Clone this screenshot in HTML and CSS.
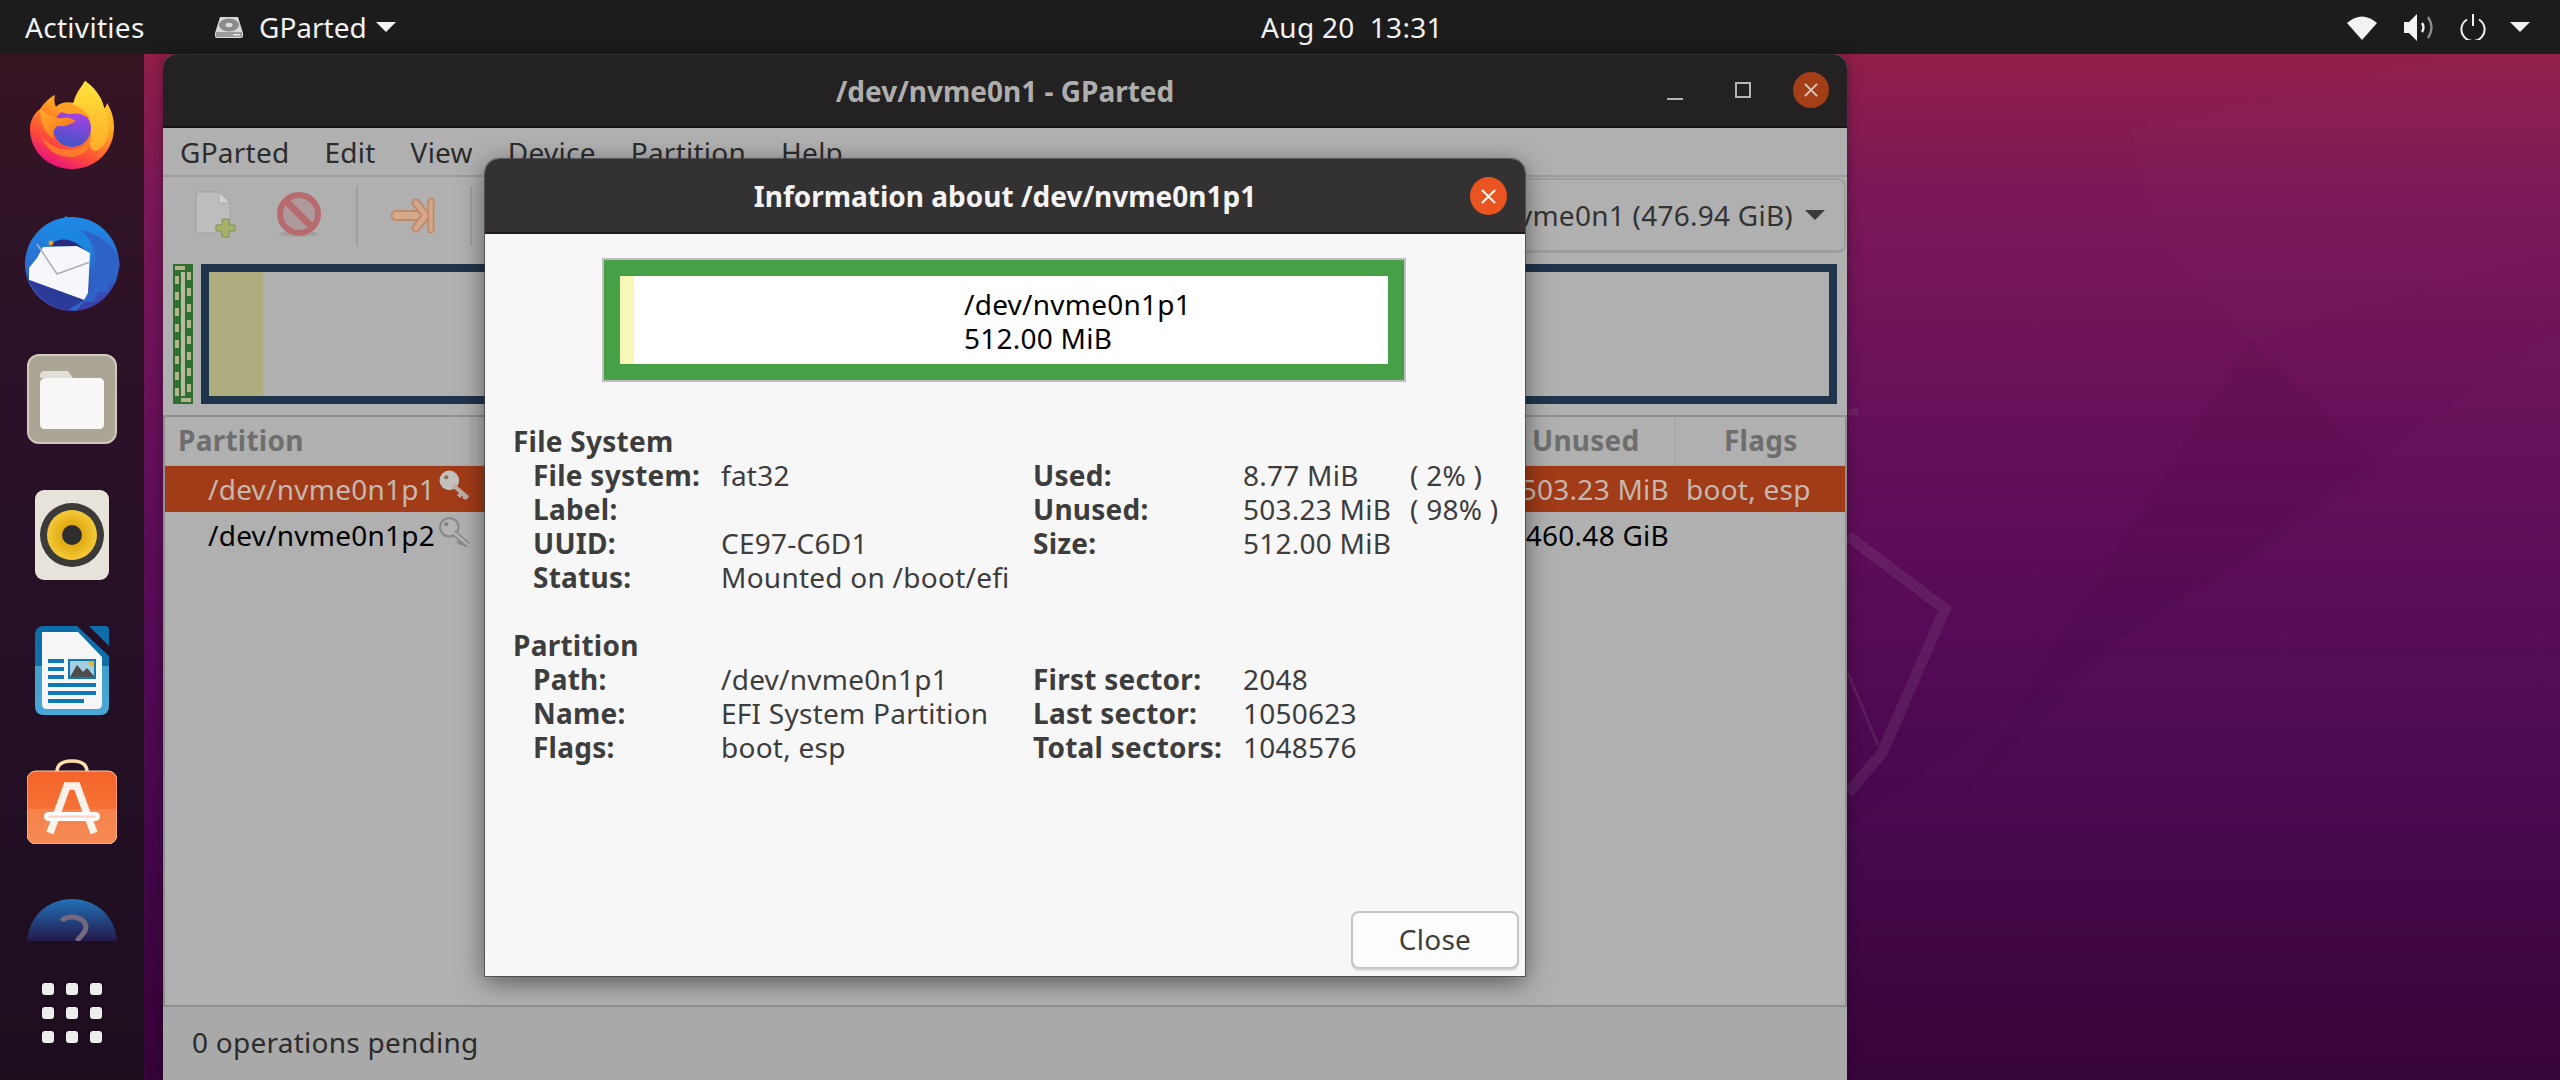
FILE: index.html
```html
<!DOCTYPE html>
<html lang="en">
<head>
<meta charset="utf-8">
<title>GParted</title>
<link rel="stylesheet" href="styles.css">
</head>
<body>
<svg class="wallpaper" viewBox="0 0 2560 1080" preserveAspectRatio="none">
  <path d="M2560 330 L1900 790 L1500 1080 L2560 1080Z" fill="#fff" opacity=".012"/>
  <path d="M2250 340 L2385 470 L2120 640 L1960 800 L2060 640Z" fill="#000" opacity=".035"/>
  <path d="M2130 130 L2560 30 L2560 250 L2250 340 L2160 240Z" fill="#fff" opacity=".012"/>
  <path d="M1848 536 L1945 609 L1882 753 L1848 793" fill="none" stroke="#fff" stroke-opacity=".07" stroke-width="11"/>
  <path d="M1848 673 L1878 745" fill="none" stroke="#fff" stroke-opacity=".08" stroke-width="3"/>
  <path d="M1848 413 L1858 411" fill="none" stroke="#fff" stroke-opacity=".07" stroke-width="7"/>
</svg>

<header class="topbar">
  <span class="activities">Activities</span>
  <div class="app-menu">
    <svg class="disk-icon" viewBox="0 0 28 22"><path d="M5 1 H23 L28 17 V20 Q28 22 26 22 H2 Q0 22 0 20 V17Z" fill="#d8d8d8"/><ellipse cx="14" cy="9" rx="10" ry="6.5" fill="#8b8b8b"/><ellipse cx="14" cy="9" rx="3.5" ry="2.2" fill="#dedede"/><rect x="1" y="16" width="26" height="5" fill="#9c9c9c"/><rect x="18" y="18" width="7" height="1.5" fill="#e8e8e8"/></svg>
    <span class="app-name">GParted</span>
    <svg class="caret" viewBox="0 0 20 10"><path d="M0 0H20L10 10Z" fill="#f2f2f2"/></svg>
  </div>
  <div class="clock">Aug 20&nbsp;&nbsp;13:31</div>
  <div class="tray">
    <svg class="tray-wifi" viewBox="0 0 30 25"><path d="M0 8 Q15 -5 30 8 L15 25Z" fill="#f2f2f2"/></svg>
    <svg class="tray-vol" viewBox="0 0 29 27"><path d="M0 8 H5 L13 0 V27 L5 19 H0Z" fill="#f2f2f2"/><path d="M18 9 Q21 13.5 18 18" fill="none" stroke="#f2f2f2" stroke-width="2.4"/><path d="M24 3 Q31 13.5 24 24" fill="none" stroke="#8a8a8a" stroke-width="2.4"/></svg>
    <svg class="tray-power" viewBox="0 0 26 26"><path d="M7 5.5 A11.6 11.6 0 1 0 19 5.5" fill="none" stroke="#f2f2f2" stroke-width="2"/><path d="M13 0 V12" stroke="#f2f2f2" stroke-width="2"/></svg>
    <svg class="tray-caret" viewBox="0 0 20 10"><path d="M0 0H20L10 10Z" fill="#f2f2f2"/></svg>
  </div>
</header>

<nav class="dock">
  <svg class="ic-firefox" viewBox="0 0 84 88">
    <defs>
      <linearGradient id="ff1" x1=".85" y1="0" x2=".35" y2="1"><stop offset="0" stop-color="#ffe53a"/><stop offset=".42" stop-color="#ffa51f"/><stop offset=".78" stop-color="#ff4a3a"/><stop offset="1" stop-color="#e8137e"/></linearGradient>
      <linearGradient id="ff2" x1=".6" y1="0" x2=".4" y2="1"><stop offset="0" stop-color="#b13fe6"/><stop offset="1" stop-color="#3f55c4"/></linearGradient>
      <linearGradient id="ff3" x1="0" y1="0" x2="1" y2="1"><stop offset="0" stop-color="#ffae2a"/><stop offset="1" stop-color="#ff6a1a"/></linearGradient>
      <linearGradient id="ff4" x1=".5" y1="0" x2=".5" y2="1"><stop offset="0" stop-color="#ffe43a"/><stop offset="1" stop-color="#ffab2a"/></linearGradient>
    </defs>
    <path d="M55 0 C50 8 44 14 44 22 C36 20 30 22 26 26 C24 22 24 18 25 14 C18 17 13 24 10 28 C4 32 0 40 0 48 C0 71 19 88 42 88 C65 88 84 71 84 46 C84 38 82 30 77 22 C76 26 75 27 74 27 C72 16 64 6 55 0Z" fill="url(#ff1)"/>
    <path d="M42 24 C46 16 51 8 55 0 C64 6 72 16 74 27 C79 36 82 52 74 64 C68 72 60 72 60 62 C64 44 58 28 42 24Z" fill="url(#ff4)"/>
    <path d="M60 62 C58 72 48 77 38 76 C26 75 16 68 12 56 C16 60 22 66 32 68 C46 70 58 66 60 56Z" fill="#ff8a24" opacity=".75"/>
    <circle cx="42" cy="47" r="19" fill="url(#ff2)"/>
    <path d="M10 28 C18 33 24 38 34 37 C40 36 42 38 46 40 C42 42 36 46 30 45 C24 44 22 52 24 58 C14 52 10 40 10 28Z" fill="url(#ff3)"/>
    <path d="M26 26 C32 20 40 22 44 24 C50 26 58 32 60 38 C52 32 46 32 40 33 C34 33 28 30 26 26Z" fill="#ffa024"/>
  </svg>
  <svg class="ic-tbird" viewBox="0 0 96 95">
    <defs>
      <linearGradient id="tb1" x1=".5" y1="0" x2=".5" y2="1"><stop offset="0" stop-color="#1d8ae6"/><stop offset=".5" stop-color="#2a6fd0"/><stop offset="1" stop-color="#3c3aa4"/></linearGradient>
    </defs>
    <circle cx="48" cy="48" r="47" fill="url(#tb1)"/>
    <path d="M34 8 L42 0 L46 3 L34 12Z" fill="#1d8ae6"/>
    <path d="M96 50 L90 58 L92 66 L84 66 L84 76 L74 76 L70 86 L60 86 L52 95 L40 92 C58 88 68 76 70 60 C74 40 70 24 56 14 C76 18 94 30 96 50Z" fill="#2f62c6"/>
    <path d="M18 26 C24 8 52 6 64 22 C70 30 68 40 66 46 L56 34 L30 30 Z" fill="#1b84dc"/>
    <path d="M26 30 C34 20 50 22 60 34 L66 48 L54 31Z" fill="#2b2a7c"/>
    <path d="M5 64 L5 52 L13 42 L19 31 L53 30 L66 37 L64 77 L60 84 Z" fill="#f7f7fb"/>
    <path d="M13 28 L33 58 L66 46" fill="none" stroke="#adadb8" stroke-width="1.5"/>
    <path d="M5 64 L60 84 L44 94 C28 92 12 80 5 64Z" fill="#2c3a98"/>
    <circle cx="27" cy="27" r="2.4" fill="#f0a020"/>
  </svg>
  <svg class="ic-files" viewBox="0 0 90 90">
    <rect x="1" y="1" width="88" height="88" rx="11" fill="#aba596" stroke="#cfcabc" stroke-width="2"/>
    <path d="M13 22 Q13 17 18 17 H41 L46 24 H13Z" fill="#e2dfd6"/>
    <path d="M13 30 Q13 24 18 24 H72 Q77 24 77 29 V70 Q77 75 72 75 H18 Q13 75 13 70Z" fill="#f8f7f5"/>
  </svg>
  <svg class="ic-rhythm" viewBox="0 0 74 90">
    <defs><radialGradient id="rb"><stop offset=".4" stop-color="#e0aa10"/><stop offset="1" stop-color="#f5c93a"/></radialGradient></defs>
    <rect x="0" y="0" width="74" height="90" rx="9" fill="#e7e3da"/>
    <circle cx="37" cy="45" r="32" fill="#3c3a38"/>
    <circle cx="37" cy="45" r="25" fill="url(#rb)"/>
    <circle cx="37" cy="45" r="10" fill="#2e2e2e"/>
  </svg>
  <svg class="ic-writer" viewBox="0 0 74 89">
    <defs><linearGradient id="wr" x1="0" y1="0" x2="0" y2="1"><stop offset="0" stop-color="#0e6ea8"/><stop offset=".45" stop-color="#0e6ea8"/><stop offset=".45" stop-color="#3f9fce"/><stop offset="1" stop-color="#4aa8d6"/></linearGradient></defs>
    <path d="M9 0 H42 L74 30 V80 Q74 89 65 89 H9 Q0 89 0 80 V9 Q0 0 9 0Z" fill="url(#wr)"/>
    <path d="M54 0 H70 Q74 0 74 4 V20Z" fill="#0e6ea8"/>
    <path d="M7 6 H43 L67 31 V78 Q67 83 62 83 H12 Q7 83 7 78Z" fill="#f6f6f6"/>
    <g fill="#0f79b8">
      <rect x="13" y="33" width="16" height="4"/><rect x="13" y="41" width="16" height="4"/><rect x="13" y="49" width="16" height="4"/>
      <rect x="13" y="57" width="48" height="4"/><rect x="13" y="65" width="48" height="4"/><rect x="13" y="73" width="36" height="4"/>
      <rect x="33" y="33" width="28" height="20"/>
    </g>
    <rect x="35" y="35" width="24" height="16" fill="#a4cce2"/>
    <path d="M35 51 L42 39 L48 46 L52 42 L59 50 V51Z" fill="#4d4d4d"/>
    <path d="M53 35 H59 V41 Q54 40 53 35Z" fill="#e8b71a"/>
  </svg>
  <svg class="ic-store" viewBox="0 0 90 85">
    <defs><linearGradient id="st" x1="0" y1="0" x2="0" y2="1"><stop offset="0" stop-color="#f4642a"/><stop offset=".52" stop-color="#f47236"/><stop offset=".52" stop-color="#f5824a"/><stop offset="1" stop-color="#f58a55"/></linearGradient></defs>
    <path d="M30 17 V13 Q30 2 45 2 Q60 2 60 13 V17" fill="none" stroke="#fbdcae" stroke-width="3.5"/>
    <rect x="0" y="12" width="90" height="73" rx="9" fill="url(#st)" stroke="#fbc9a8" stroke-width="1"/>
    <path d="M23 74 L40 27 H50 L67 74" fill="none" stroke="#fff" stroke-opacity=".9" stroke-width="7.5"/>
    <rect x="17" y="53" width="56" height="9" rx="4.5" fill="#fff"/>
    <rect x="21" y="56.5" width="48" height="2" fill="#fbd0c4"/>
  </svg>
  <svg class="ic-help" viewBox="0 0 90 42">
    <defs><linearGradient id="hp" x1="0" y1="0" x2="0" y2="1"><stop offset="0" stop-color="#2172b8"/><stop offset="1" stop-color="#24184a"/></linearGradient></defs>
    <path d="M0 42 C2 16 22 0 45 0 C68 0 88 16 90 42Z" fill="url(#hp)"/>
    <path d="M35 22 C38 16 58 16 59 28 C59 34 53 37 50 42" fill="none" stroke="#75697f" stroke-width="5"/>
  </svg>
  <div class="app-grid">
    <i></i><i></i><i></i><i></i><i></i><i></i><i></i><i></i><i></i>
  </div>
</nav>

<section class="window">
  <div class="win-title">
    <span class="win-title-text">/dev/nvme0n1 - GParted</span>
    <div class="win-controls">
      <span class="wc-min"></span>
      <span class="wc-max"></span>
      <span class="wc-close"><svg viewBox="0 0 16 16"><path d="M1 1L15 15M15 1L1 15" stroke="#d8c8c0" stroke-width="2.2"/></svg></span>
    </div>
  </div>
  <div class="menubar">
    <span>GParted</span><span>Edit</span><span>View</span><span>Device</span><span>Partition</span><span>Help</span>
  </div>
  <div class="toolbar">
    <svg class="tb-new" viewBox="0 0 41 47">
      <path d="M1 1 H24 L35 12 V42 H1Z" fill="#bdbdbd" stroke="#a0a0a0"/>
      <path d="M24 1 V12 H35Z" fill="#d0d0d0" stroke="#a8a8a8"/>
      <path d="M27 28 H34 V34 H40 V40 H34 V46 H27 V40 H21 V34 H27Z" fill="#a6b26a" stroke="#7f9155"/>
    </svg>
    <svg class="tb-stop" viewBox="0 0 44 46">
      <ellipse cx="22" cy="42" rx="20" ry="3" fill="#a2a2a2"/>
      <circle cx="22" cy="22" r="19" fill="#ae9a9a" stroke="#b86b6e" stroke-width="6"/>
      <path d="M10 10 L34 34" stroke="#b86b6e" stroke-width="7"/>
    </svg>
    <span class="tb-sep"></span>
    <svg class="tb-arrow" viewBox="0 0 44 35">
      <path d="M5 17.5 H30" stroke="#c08a6c" stroke-width="11" stroke-linecap="round"/>
      <path d="M5 17.5 H30" stroke="#d4a98a" stroke-width="7" stroke-linecap="round"/>
      <path d="M25 5 L35 17.5 L25 30" fill="none" stroke="#c08a6c" stroke-width="9" stroke-linecap="round" stroke-linejoin="round"/>
      <path d="M25 5 L35 17.5 L25 30" fill="none" stroke="#d4a98a" stroke-width="5" stroke-linecap="round" stroke-linejoin="round"/>
      <path d="M40 3 V32" stroke="#c08a6c" stroke-width="7" stroke-linecap="round"/>
      <path d="M40 3 V32" stroke="#d4a98a" stroke-width="3.5" stroke-linecap="round"/>
    </svg>
    <span class="tb-sep tb-sep2"></span>
    <div class="combo"><span>/dev/nvme0n1 (476.94 GiB)</span><svg class="combo-caret" viewBox="0 0 20 10"><path d="M0 0H20L10 10Z" fill="#3a3a3a"/></svg></div>
  </div>
  <div class="graph">
    <svg class="graph-unalloc" viewBox="0 0 20 140">
      <defs>
        <pattern id="dashL" width="4" height="16" patternUnits="userSpaceOnUse" y="12"><rect width="4" height="8" fill="#b3b38a"/></pattern>
        <pattern id="dashR" width="4" height="16" patternUnits="userSpaceOnUse" y="8"><rect width="4" height="8" fill="#b3b38a"/></pattern>
      </defs>
      <rect width="20" height="140" fill="#2f6f2f"/>
      <rect x="2" y="12" width="4" height="120" fill="url(#dashL)"/>
      <rect x="14" y="8" width="4" height="120" fill="url(#dashR)"/>
      <rect x="8" y="8" width="4" height="124" fill="#b9b9a6"/>
      <rect x="2" y="2" width="10" height="4" fill="#b3b38a"/>
      <rect x="8" y="134" width="10" height="4" fill="#b3b38a"/>
    </svg>
    <div class="graph-part"><div class="graph-used"></div></div>
  </div>
  <div class="tree">
    <div class="tree-row tree-head">
      <div class="cell cell-part">Partition</div>
      <div class="cell"></div>
      <div class="cell cell-unused-h">Unused</div>
      <div class="cell cell-flags-h">Flags</div>
    </div>
    <div class="tree-row tree-sel">
      <div class="cell cell-dev">/dev/nvme0n1p1<svg class="key" viewBox="0 0 32 30"><circle cx="11" cy="10" r="9.5" fill="#c4c0bc"/><circle cx="8" cy="7" r="2" fill="#8f6a56"/><path d="M15 15 L29 27 M23 22 L20 26 M27 25 L25 28" stroke="#b8aea6" stroke-width="4"/></svg></div>
      <div class="cell"></div>
      <div class="cell cell-num">503.23 MiB</div>
      <div class="cell cell-flag">boot, esp</div>
    </div>
    <div class="tree-row">
      <div class="cell cell-dev">/dev/nvme0n1p2<svg class="key" viewBox="0 0 32 30"><circle cx="11" cy="10" r="9" fill="#b4b4b4" stroke="#8a8a8a" stroke-width="2.2"/><circle cx="8" cy="7" r="2" fill="#7e7e7e"/><path d="M15 15 L29 27 M23 22 L20 26 M27 25 L25 28" stroke="#8a8a8a" stroke-width="5.5"/><path d="M15 15 L29 27" stroke="#b8b8b8" stroke-width="2.4"/></svg></div>
      <div class="cell"></div>
      <div class="cell cell-num">460.48 GiB</div>
      <div class="cell cell-flag"></div>
    </div>
  </div>
  <div class="statusbar">0 operations pending</div>
</section>

<section class="dialog">
  <div class="dlg-title">
    <span class="dlg-title-text">Information about /dev/nvme0n1p1</span>
    <span class="dlg-close"><svg viewBox="0 0 16 16"><path d="M1 1L15 15M15 1L1 15" stroke="#fff" stroke-width="2.2"/></svg></span>
  </div>
  <div class="dlg-body">
    <div class="part-box">
      <div class="part-inner">
        <div class="part-used"></div>
        <div class="part-text">/dev/nvme0n1p1<br>512.00 MiB</div>
      </div>
    </div>
    <div class="info">
      <div class="info-head">File System</div>
      <div class="info-l">File system:</div><div>fat32</div><div class="info-r">Used:</div><div>8.77 MiB</div><div>( 2% )</div>
      <div class="info-l">Label:</div><div></div><div class="info-r">Unused:</div><div>503.23 MiB</div><div>( 98% )</div>
      <div class="info-l">UUID:</div><div>CE97-C6D1</div><div class="info-r">Size:</div><div>512.00 MiB</div><div></div>
      <div class="info-l">Status:</div><div>Mounted on /boot/efi</div><div></div><div></div><div></div>
      <div class="info-head info-gap">Partition</div>
      <div class="info-l">Path:</div><div>/dev/nvme0n1p1</div><div class="info-r">First sector:</div><div>2048</div><div></div>
      <div class="info-l">Name:</div><div>EFI System Partition</div><div class="info-r">Last sector:</div><div>1050623</div><div></div>
      <div class="info-l">Flags:</div><div>boot, esp</div><div class="info-r">Total sectors:</div><div>1048576</div><div></div>
    </div>
    <button class="btn-close">Close</button>
  </div>
</section>
</body>
</html>
```

FILE: styles.css
```css
* { box-sizing: border-box; }
html, body { margin: 0; height: 100%; }
body {
  width: 2560px; height: 1080px; overflow: hidden; position: relative;
  font-family: "Noto Sans", "Open Sans", sans-serif; font-size: 28px; letter-spacing: .25px;
  background: linear-gradient(180deg, #931f48 4%, #7b1858 18%, #640f5a 42%, #520a54 62%, #44074a 78%, #360338 100%);
}
.wallpaper { position: absolute; inset: 0; width: 2560px; height: 1080px; }

/* top bar */
.topbar {
  position: absolute; left: 0; top: 0; width: 2560px; height: 54px;
  background: #1c1c1c; color: #f2f2f2; display: flex; align-items: center; letter-spacing: .3px;
}
.activities { margin-left: 25px; width: 190px; }
.app-menu { display: flex; align-items: center; }
.disk-icon { width: 28px; height: 22px; }
.app-name { margin-left: 16px; letter-spacing: 0; }
.caret { width: 20px; height: 10px; margin-left: 9px; }
.clock { position: absolute; left: 0; right: 0; top: 0; height: 54px; line-height: 54px; text-align: center; padding-left: 144px; }
.tray { margin-left: auto; display: flex; align-items: center; padding-right: 30px; }
.tray-wifi { width: 30px; height: 25px; }
.tray-vol { width: 29px; height: 27px; margin-left: 27px; }
.tray-power { width: 26px; height: 26px; margin-left: 27px; }
.tray-caret { width: 20px; height: 10px; margin-left: 24px; }

/* dock */
.dock {
  position: absolute; left: 0; top: 54px; bottom: 0; width: 144px;
  background: rgba(20, 18, 20, .72);
  display: flex; flex-direction: column; align-items: center;
}
.ic-firefox { width: 84px; height: 88px; margin-top: 27px; }
.ic-tbird { width: 96px; height: 95px; margin-top: 47px; }
.ic-files { width: 90px; height: 90px; margin-top: 43px; }
.ic-rhythm { width: 74px; height: 90px; margin-top: 46px; }
.ic-writer { width: 74px; height: 89px; margin-top: 46px; }
.ic-store { width: 90px; height: 85px; margin-top: 44px; }
.ic-help { width: 90px; height: 42px; margin-top: 55px; }
.app-grid { display: grid; grid-template-columns: repeat(3, 12px); grid-auto-rows: 12px; gap: 12px; margin-top: 42px; }
.app-grid i { background: #eeeeee; border-radius: 3px; }

/* main window */
.window {
  position: absolute; left: 163px; top: 54px; width: 1684px; height: 1026px;
  background: #b0b0b0; display: flex; flex-direction: column;
  border-radius: 14px 14px 0 0; box-shadow: 0 0 14px rgba(0,0,0,.35);
}
.win-title {
  height: 74px; background: #232122; border-radius: 14px 14px 0 0; position: relative; flex: none;
  border-bottom: 2px solid #161515; border-top: 1px solid #2f2d2e;
  display: flex; align-items: center; justify-content: center; color: #aeaeae; font-weight: 700;
}
.win-title-text { letter-spacing: 0; }
.win-controls { position: absolute; right: 18px; top: 17px; display: flex; align-items: center; }
.wc-min { width: 16px; height: 2px; background: #b5b5b5; margin-top: 17px; }
.wc-max { width: 16px; height: 16px; border: 2px solid #b5b5b5; margin-left: 52px; }
.wc-close { width: 36px; height: 36px; border-radius: 50%; background: #a43e16; margin-left: 42px; display: flex; align-items: center; justify-content: center; }
.wc-close svg { width: 14px; height: 14px; }
.menubar { height: 49px; flex: none; display: flex; align-items: center; padding-left: 17px; color: #2c2c2c; border-bottom: 2px solid #9c9c9c; gap: 35px; }
.toolbar { height: 77px; display: flex; align-items: center; flex: none; }
.tb-new { width: 41px; height: 47px; margin-left: 32px; margin-top: -2px; }
.tb-stop { width: 44px; height: 46px; margin-left: 41px; margin-top: -2px; }
.tb-sep { width: 2px; height: 60px; background: #9f9f9f; margin-left: 35px; }
.tb-arrow { width: 44px; height: 35px; margin-left: 33px; }
.tb-sep2 { margin-left: 35px; }
.combo {
  margin-left: auto; width: 440px; height: 75px; margin-right: 1px;
  border: 2px solid #9f9f9f; border-bottom-width: 3px; border-radius: 8px;
  display: flex; align-items: center; justify-content: flex-end; color: #333; white-space: nowrap; overflow: hidden;
}
.combo-caret { width: 20px; height: 10px; margin-left: 12px; margin-right: 19px; flex: none; }
.graph { height: 140px; margin-top: 10px; padding: 0 10px; display: flex; gap: 8px; flex: none; }
.graph-unalloc { width: 20px; height: 140px; flex: none; }
.graph-part { flex: 1; border: 8px solid #20344b; }
.graph-used { width: 54px; height: 100%; background: #adad80; }
.tree { flex: 1; margin: 11px 0 0; border-top: 2px solid #8f8f8f; border-left: 2px solid #8f8f8f; border-right: 2px solid #8f8f8f; min-height: 0; }
.tree-row { display: grid; grid-template-columns: 308px 1046px 157px 1fr; height: 46px; align-items: center; color: #000; }
.tree-head { height: 49px; color: #6e6e6e; font-weight: 700; border-bottom: 1px solid #a6a6a6; }
.tree-head .cell { padding-bottom: 3px; }
.cell { white-space: nowrap; height: 100%; display: flex; align-items: center; }
.cell-part { padding-left: 13px; border-right: 2px solid #a9a9a9; }
.cell-unused-h { padding-left: 13px; border-right: 2px solid #a9a9a9; }
.cell-flags-h { padding-left: 48px; }
.tree-sel { background: #a23b17; color: #c4b8b0; }
.tree-sel .cell { padding-bottom: 1px; }
.cell-dev { padding-left: 43px; position: relative; }
.key { width: 33px; height: 31px; margin-left: 3px; margin-top: -6px; flex: none; }
.cell-num { justify-content: flex-end; padding-right: 7px; }
.cell-flag { padding-left: 10px; }
.statusbar { height: 75px; flex: none; background: #a9a9a9; border-top: 2px solid #8f8f8f; padding: 0 0 3px 29px; display: flex; align-items: center; color: #2c2c2c; }

/* dialog */
.dialog {
  position: absolute; left: 485px; top: 159px; width: 1040px; height: 817px;
  display: flex; flex-direction: column; background: #f7f7f7; color: #3d3d3d;
  border-radius: 14px 14px 0 0; box-shadow: 0 0 0 1px rgba(60,60,60,.7), 0 6px 26px rgba(0,0,0,.5);
}
.dlg-title {
  height: 75px; flex: none; background: #333132; border-bottom: 2px solid #1e1d1d; border-radius: 14px 14px 0 0;
  display: flex; align-items: center; justify-content: center; color: #f4f4f4; font-weight: 700; position: relative;
}
.dlg-title-text { letter-spacing: 0; margin-top: 1px; }
.dlg-close { position: absolute; right: 18px; top: 18px; width: 37px; height: 38px; border-radius: 50%; background: #e95420; display: flex; align-items: center; justify-content: center; }
.dlg-close svg { width: 15px; height: 15px; }
.dlg-body { flex: 1; display: flex; flex-direction: column; min-height: 0; }
.part-box { margin: 24px 0 0 117px; width: 804px; height: 124px; background: #46a046; border: 2px solid #c0c0c0; padding: 16px; flex: none; }
.part-inner { height: 88px; background: #fff; display: flex; color: #000; }
.part-used { width: 14px; background: #f8f8b8; flex: none; }
.part-text { line-height: 34px; margin: 11px 0 0 330px; white-space: nowrap; }
.info {
  margin: 42px 0 0 28px; display: grid; grid-template-columns: 208px 312px 210px 167px 1fr;
  grid-auto-rows: 34px; line-height: 34px; white-space: nowrap;
}
.info-head { grid-column: 1 / -1; font-weight: 700; }
.info-gap { margin-top: 34px; grid-row-end: span 2; line-height: 34px; }
.info-l { font-weight: 700; padding-left: 20px; }
.info-r { font-weight: 700; }
.btn-close {
  margin: auto 6px 7px auto; width: 168px; height: 58px; flex: none; padding: 0 0 3px;
  font: inherit; letter-spacing: inherit; color: #3d3d3d; background: #fdfdfd;
  border: 2px solid #c4c4c4; border-radius: 8px; box-shadow: 0 2px 0 #dedede;
}
```
